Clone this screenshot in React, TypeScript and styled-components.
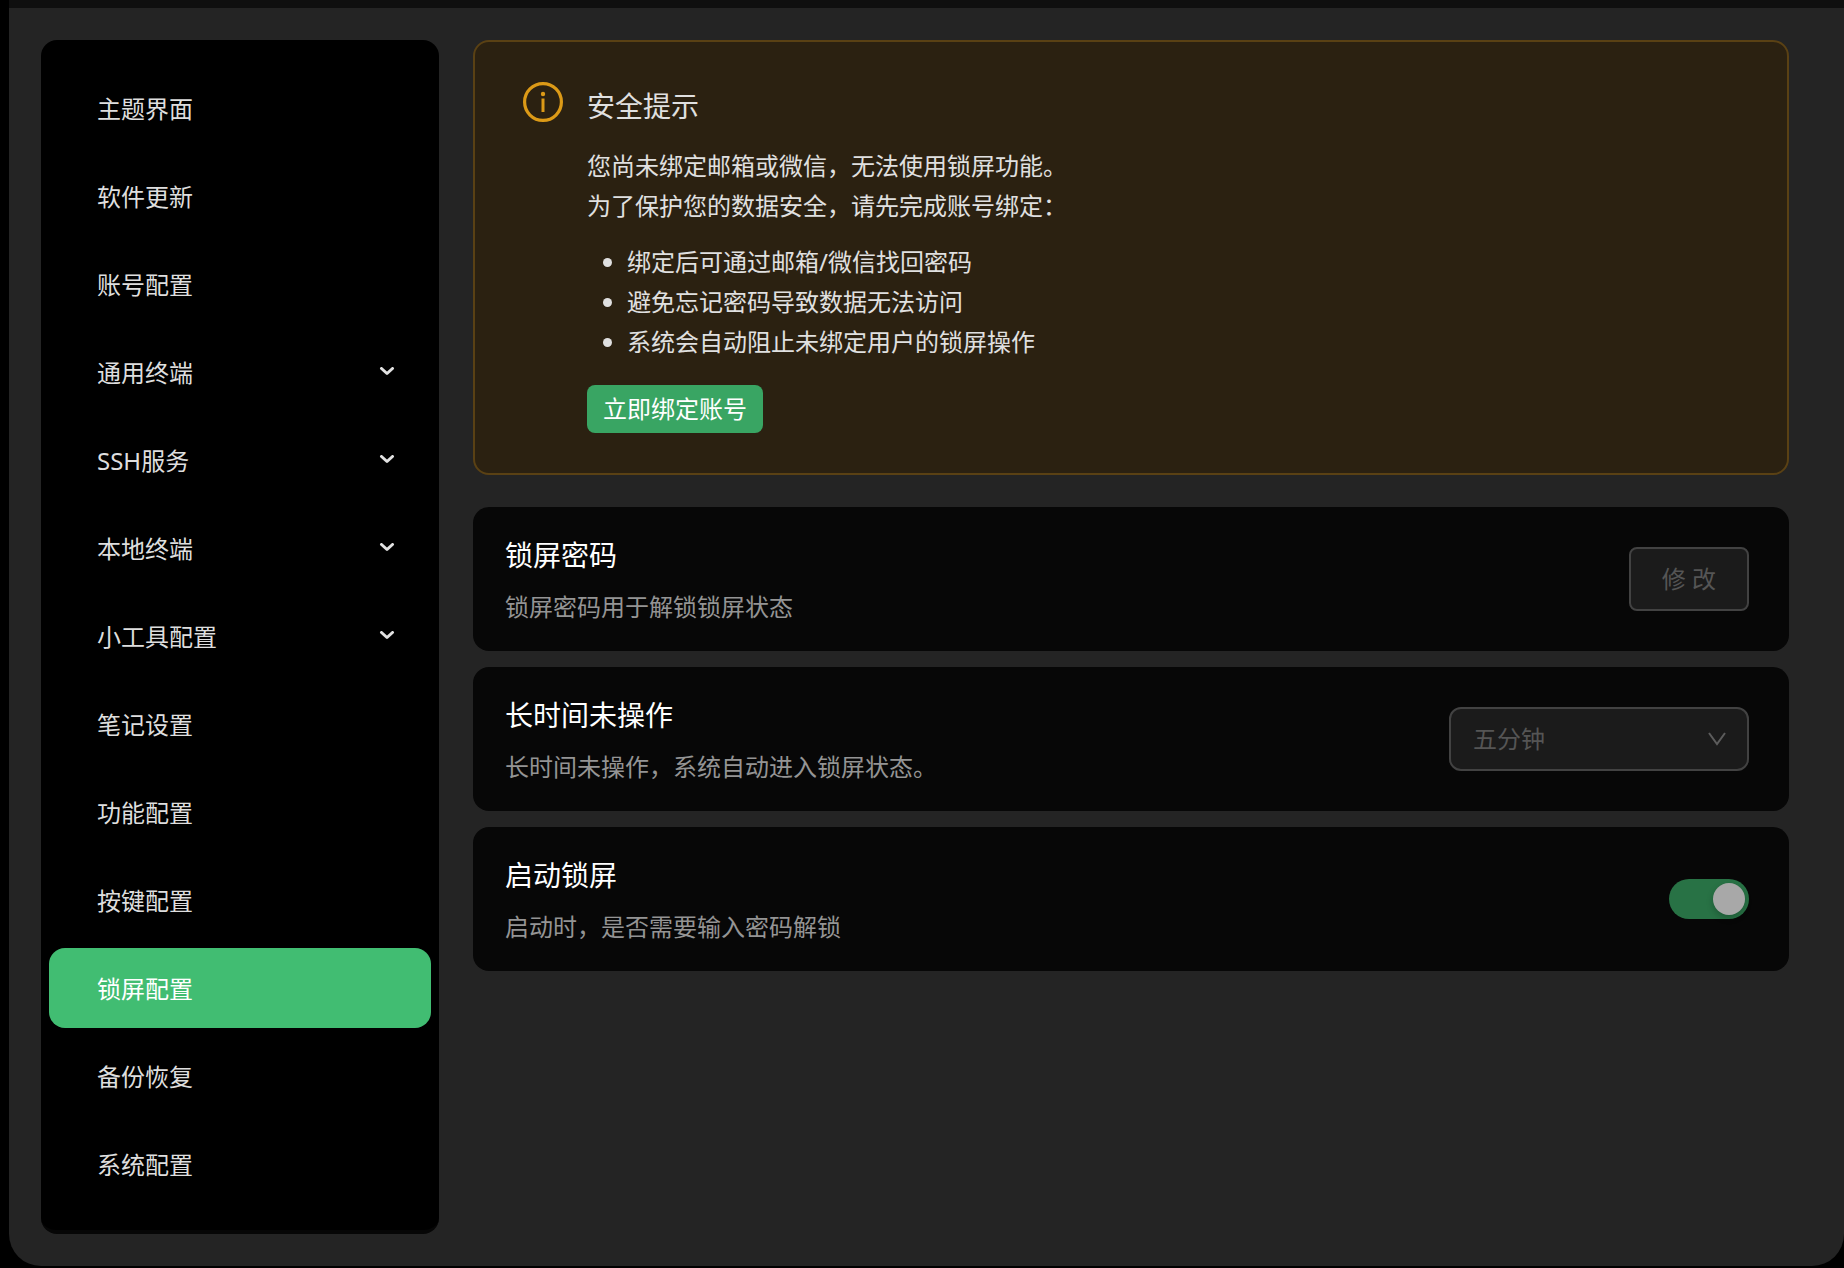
import React from "react";
import styled, { createGlobalStyle } from "styled-components";

const GlobalStyle = createGlobalStyle`
  * {
    box-sizing: border-box;
  }

  body {
    margin: 0;
    background: #000;
    color: #e0e0e0;
    font-family: "Noto Sans", "Noto Sans CJK SC", sans-serif;
    font-size: 24px;
    line-height: 40px;
  }

  h2, p, ul {
    margin: 0;
  }

  button, select, input {
    margin: 0;
    font: inherit;
  }
`;

const Window = styled.div`
  display: flex;
  flex-direction: column;
  min-height: 100vh;
  padding: 0 0 2px 9px;
`;

const TitleStrip = styled.header`
  height: 8px;
  background: #0f0f0f;
`;

const Workspace = styled.div`
  display: flex;
  flex: 1;
  gap: 34px;
  padding: 32px 55px 32px 32px;
  background: #242424;
  border-radius: 0 0 32px 32px;
`;

const Sidebar = styled.nav`
  flex: none;
  display: flex;
  flex-direction: column;
  gap: 8px;
  width: 398px;
  padding: 28px 8px 24px;
  background: #000;
  border-bottom: 4px solid #060606;
  border-radius: 16px;
`;

const NavItem = styled.button<{ $active?: boolean }>`
  display: flex;
  align-items: center;
  justify-content: space-between;
  height: 80px;
  padding: 2px 36px 0 48px;
  border: 0;
  border-radius: 16px;
  background: ${(p) => (p.$active ? "#41bd72" : "transparent")};
  color: ${(p) => (p.$active ? "#fff" : "#dedede")};
  text-align: left;
  cursor: pointer;
`;

const NavChevron = styled.svg`
  width: 16px;
  height: 12px;
  fill: none;
  stroke: #e2e2e2;
  stroke-width: 3;
  stroke-linecap: round;
  stroke-linejoin: round;
`;

const Main = styled.main`
  flex: 1;
  min-width: 0;
  display: flex;
  flex-direction: column;
  gap: 32px;
`;

const Alert = styled.section`
  display: flex;
  align-items: flex-start;
  gap: 24px;
  padding: 40px 48px;
  background: #2b2111;
  border: 2px solid #5a4114;
  border-radius: 16px;
`;

const InfoIcon = styled.svg`
  flex: none;
  width: 40px;
  height: 40px;
`;

const AlertBody = styled.div`
  display: flex;
  flex-direction: column;
  align-items: flex-start;
`;

const AlertTitle = styled.h2`
  margin-bottom: 16px;
  font-size: 28px;
  font-weight: 400;
  line-height: 48px;
`;

const AlertList = styled.ul`
  margin: 16px 0 23px;
  padding-left: 40px;
`;

const BindButton = styled.button`
  height: 48px;
  padding: 0 16px;
  border: 0;
  border-radius: 8px;
  background: #39a563;
  color: #fff;
  cursor: pointer;
`;

const Settings = styled.div`
  display: flex;
  flex-direction: column;
  gap: 16px;
`;

const Card = styled.section`
  display: flex;
  align-items: center;
  justify-content: space-between;
  gap: 32px;
  padding: 24px 40px 24px 32px;
  background: #070707;
  border-radius: 16px;
`;

const CardText = styled.div`
  display: flex;
  flex-direction: column;
  gap: 8px;
`;

const CardTitle = styled.h2`
  color: #fff;
  font-size: 28px;
  font-weight: 400;
  line-height: 48px;
`;

const CardNote = styled.p`
  color: #949494;
`;

const ModifyButton = styled.button`
  height: 64px;
  padding: 0 31px;
  border: 2px solid #424242;
  border-radius: 8px;
  background: #1b1b1b;
  color: #555;
`;

const SelectBox = styled.div`
  display: grid;
  align-items: center;
  width: 300px;
`;

const Select = styled.select`
  grid-area: 1 / 1;
  width: 100%;
  height: 64px;
  padding: 0 56px 0 22px;
  appearance: none;
  border: 2px solid #424242;
  border-radius: 12px;
  background: #1b1b1b;
  color: #555;
  opacity: 1;
`;

const SelectArrow = styled.svg`
  grid-area: 1 / 1;
  justify-self: end;
  width: 18px;
  height: 14px;
  margin-right: 23px;
  fill: none;
  stroke: #5c5c5c;
  stroke-width: 2;
  pointer-events: none;
`;

const Switch = styled.input`
  display: flex;
  align-items: center;
  width: 80px;
  height: 40px;
  padding: 4px;
  appearance: none;
  border-radius: 20px;
  background: #287245;

  &::before {
    content: "";
    width: 32px;
    height: 32px;
    border-radius: 50%;
    background: #a8a8a8;
    box-shadow: 0 3px 6px rgba(0, 20, 10, 0.25);
  }

  &:checked::before {
    margin-left: auto;
  }
`;

const navItems: { label: string; expandable?: boolean }[] = [
  { label: "主题界面" },
  { label: "软件更新" },
  { label: "账号配置" },
  { label: "通用终端", expandable: true },
  { label: "SSH服务", expandable: true },
  { label: "本地终端", expandable: true },
  { label: "小工具配置", expandable: true },
  { label: "笔记设置" },
  { label: "功能配置" },
  { label: "按键配置" },
  { label: "锁屏配置" },
  { label: "备份恢复" },
  { label: "系统配置" },
];

const activeItem = "锁屏配置";

function SettingRow({
  id,
  title,
  note,
  children,
}: {
  id: string;
  title: string;
  note: string;
  children: React.ReactNode;
}) {
  return (
    <Card>
      <CardText>
        <CardTitle>
          <label htmlFor={id}>{title}</label>
        </CardTitle>
        <CardNote>{note}</CardNote>
      </CardText>
      {children}
    </Card>
  );
}

export default function App() {
  return (
    <>
      <GlobalStyle />
      <Window lang="zh-CN">
        <TitleStrip />
        <Workspace>
          <Sidebar>
            {navItems.map(({ label, expandable }) => (
              <NavItem
                key={label}
                type="button"
                $active={label === activeItem}
                aria-current={label === activeItem ? "page" : undefined}
                aria-expanded={expandable ? false : undefined}
              >
                {label}
                {expandable && (
                  <NavChevron viewBox="0 0 16 12" aria-hidden="true">
                    <path d="M2.5 1.5 L8 6.5 L13.5 1.5" />
                  </NavChevron>
                )}
              </NavItem>
            ))}
          </Sidebar>
          <Main>
            <Alert>
              <InfoIcon viewBox="0 0 40 40" aria-hidden="true">
                <circle cx="20" cy="20" r="18.4" fill="none" stroke="#dc9a17" strokeWidth="3.2" />
                <circle cx="20" cy="12" r="2.2" fill="#dc9a17" />
                <rect x="18.5" y="16.5" width="3" height="13.5" fill="#dc9a17" />
              </InfoIcon>
              <AlertBody>
                <AlertTitle>安全提示</AlertTitle>
                <p>您尚未绑定邮箱或微信，无法使用锁屏功能。</p>
                <p>为了保护您的数据安全，请先完成账号绑定：</p>
                <AlertList>
                  <li>绑定后可通过邮箱/微信找回密码</li>
                  <li>避免忘记密码导致数据无法访问</li>
                  <li>系统会自动阻止未绑定用户的锁屏操作</li>
                </AlertList>
                <BindButton type="button">立即绑定账号</BindButton>
              </AlertBody>
            </Alert>
            <Settings>
              <SettingRow id="password" title="锁屏密码" note="锁屏密码用于解锁锁屏状态">
                <ModifyButton id="password" type="button" disabled>
                  修 改
                </ModifyButton>
              </SettingRow>
              <SettingRow id="idle" title="长时间未操作" note="长时间未操作，系统自动进入锁屏状态。">
                <SelectBox>
                  <Select id="idle" disabled defaultValue="5">
                    <option value="5">五分钟</option>
                  </Select>
                  <SelectArrow viewBox="0 0 18 14" aria-hidden="true">
                    <path d="M1 1 L9 12 L17 1" />
                  </SelectArrow>
                </SelectBox>
              </SettingRow>
              <SettingRow id="startup" title="启动锁屏" note="启动时，是否需要输入密码解锁">
                <Switch id="startup" type="checkbox" role="switch" defaultChecked disabled />
              </SettingRow>
            </Settings>
          </Main>
        </Workspace>
      </Window>
    </>
  );
}
